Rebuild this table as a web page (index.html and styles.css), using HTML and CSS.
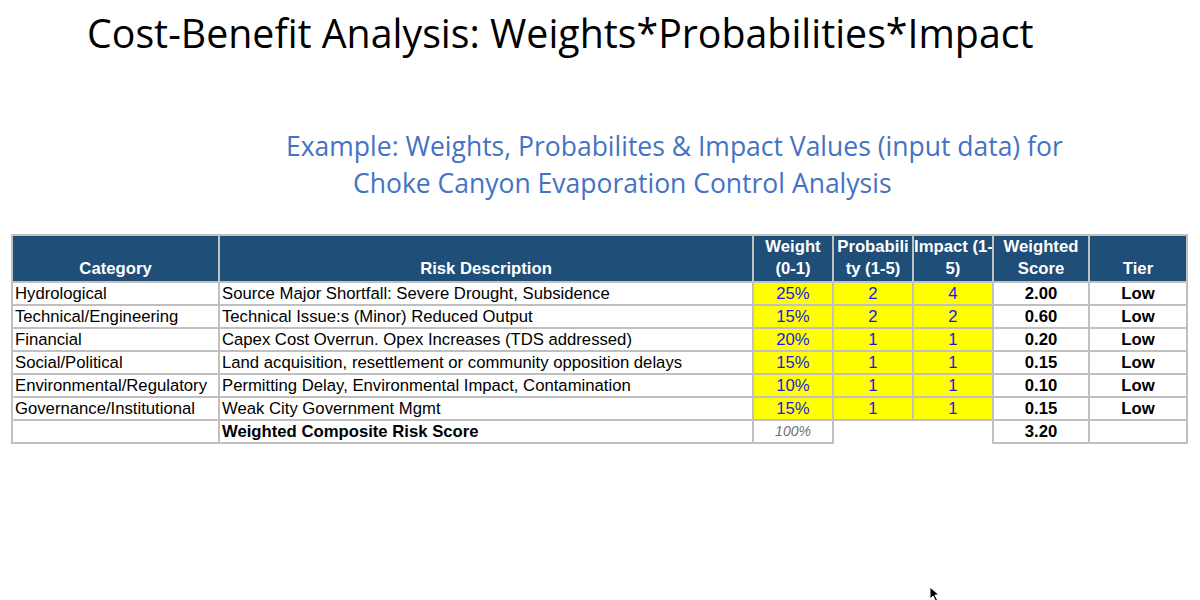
FILE: index.html
```html
<!DOCTYPE html>
<html>
<head>
<meta charset="utf-8">
<link rel="stylesheet" href="styles.css">
</head>
<body>
<div class="slide">
  <h1 class="title">Cost-Benefit Analysis: Weights*Probabilities*Impact</h1>
  <div class="subtitle">
    <div class="sub-line">Example: Weights, Probabilites &amp; Impact Values (input data) for</div>
    <div class="sub-line indent">Choke Canyon Evaporation Control Analysis</div>
  </div>
  <table class="risk">
    <colgroup>
      <col class="c-cat"><col class="c-desc"><col class="c-num"><col class="c-num"><col class="c-num"><col class="c-score"><col class="c-tier">
    </colgroup>
    <thead>
      <tr>
        <th>Category</th>
        <th>Risk Description</th>
        <th>Weight<br>(0-1)</th>
        <th>Probabili<br>ty (1-5)</th>
        <th>Impact (1-<br>5)</th>
        <th>Weighted<br>Score</th>
        <th>Tier</th>
      </tr>
    </thead>
    <tbody>
      <tr><td>Hydrological</td><td>Source Major Shortfall: Severe Drought, Subsidence</td><td class="in">25%</td><td class="in">2</td><td class="in">4</td><td class="score">2.00</td><td class="tier">Low</td></tr>
      <tr><td>Technical/Engineering</td><td>Technical Issue:s (Minor) Reduced Output</td><td class="in">15%</td><td class="in">2</td><td class="in">2</td><td class="score">0.60</td><td class="tier">Low</td></tr>
      <tr><td>Financial</td><td>Capex Cost Overrun. Opex Increases (TDS addressed)</td><td class="in">20%</td><td class="in">1</td><td class="in">1</td><td class="score">0.20</td><td class="tier">Low</td></tr>
      <tr><td>Social/Political</td><td>Land acquisition, resettlement or community opposition delays</td><td class="in">15%</td><td class="in">1</td><td class="in">1</td><td class="score">0.15</td><td class="tier">Low</td></tr>
      <tr><td>Environmental/Regulatory</td><td>Permitting Delay, Environmental Impact, Contamination</td><td class="in">10%</td><td class="in">1</td><td class="in">1</td><td class="score">0.10</td><td class="tier">Low</td></tr>
      <tr><td>Governance/Institutional</td><td>Weak City Government Mgmt</td><td class="in">15%</td><td class="in">1</td><td class="in">1</td><td class="score">0.15</td><td class="tier">Low</td></tr>
      <tr class="total"><td></td><td class="bold">Weighted Composite Risk Score</td><td class="sum">100%</td><td class="blank"></td><td class="blank"></td><td class="score">3.20</td><td></td></tr>
    </tbody>
  </table>
  <svg class="cursor" width="12" height="16" viewBox="0 0 12 16"><path d="M1 1 L1 13 L4 10 L6.5 15 L8.5 14 L6 9 L10 9 Z" fill="#000" stroke="#fff" stroke-width="1"/></svg>
</div>
</body>
</html>
```

FILE: styles.css
```css
html, body {
  margin: 0;
  padding: 0;
  background: #fff;
}
.slide {
  position: relative;
  width: 1200px;
  height: 600px;
  overflow: hidden;
}
.title {
  margin: 0;
  padding: 8px 0 0 87px;
  height: 62px;
  box-sizing: border-box;
  font-family: "Open Sans", "DejaVu Sans", sans-serif;
  font-weight: 400;
  font-size: 39.3px;
  line-height: 50px;
  color: #000;
  white-space: nowrap;
}
.subtitle {
  margin-top: 66px;
  padding-left: 286px;
  font-family: "Open Sans", "DejaVu Sans", sans-serif;
  font-size: 26.5px;
  line-height: 37px;
  color: #4472c4;
  white-space: nowrap;
}
.sub-line.indent {
  padding-left: 67px;
}
.risk {
  margin: 32px 0 0 11px;
  width: 1175px;
  table-layout: fixed;
  border-collapse: collapse;
  font-family: "Liberation Sans", Arial, sans-serif;
  font-size: 16.7px;
  color: #000;
}
.c-cat { width: 207px; }
.c-desc { width: 534px; }
.c-num { width: 80px; }
.c-score { width: 96px; }
.c-tier { width: 98px; }
.risk th, .risk td {
  border: 2px solid #c0c0c0;
  padding: 0 2px;
  white-space: nowrap;
  overflow: hidden;
}
.risk th {
  background: #1f4e79;
  color: #fff;
  font-weight: 700;
  height: 44px;
  line-height: 22px;
  vertical-align: bottom;
  text-align: center;
  padding: 0 0 1px 0;
}
.risk td {
  height: 21px;
  line-height: 21px;
  text-align: left;
}
.risk td.in {
  background: #ffff00;
  color: #1a1ae6;
  text-align: center;
}
.risk td.score, .risk td.tier {
  font-weight: 700;
  text-align: center;
}
.risk td.bold {
  font-weight: 700;
}
.risk td.sum {
  font-style: italic;
  color: #707070;
  font-size: 14px;
  text-align: center;
}
.risk td.blank {
  border-left: none;
  border-right: none;
  border-bottom: none;
}
.cursor {
  position: absolute;
  left: 929px;
  top: 586px;
}
```
